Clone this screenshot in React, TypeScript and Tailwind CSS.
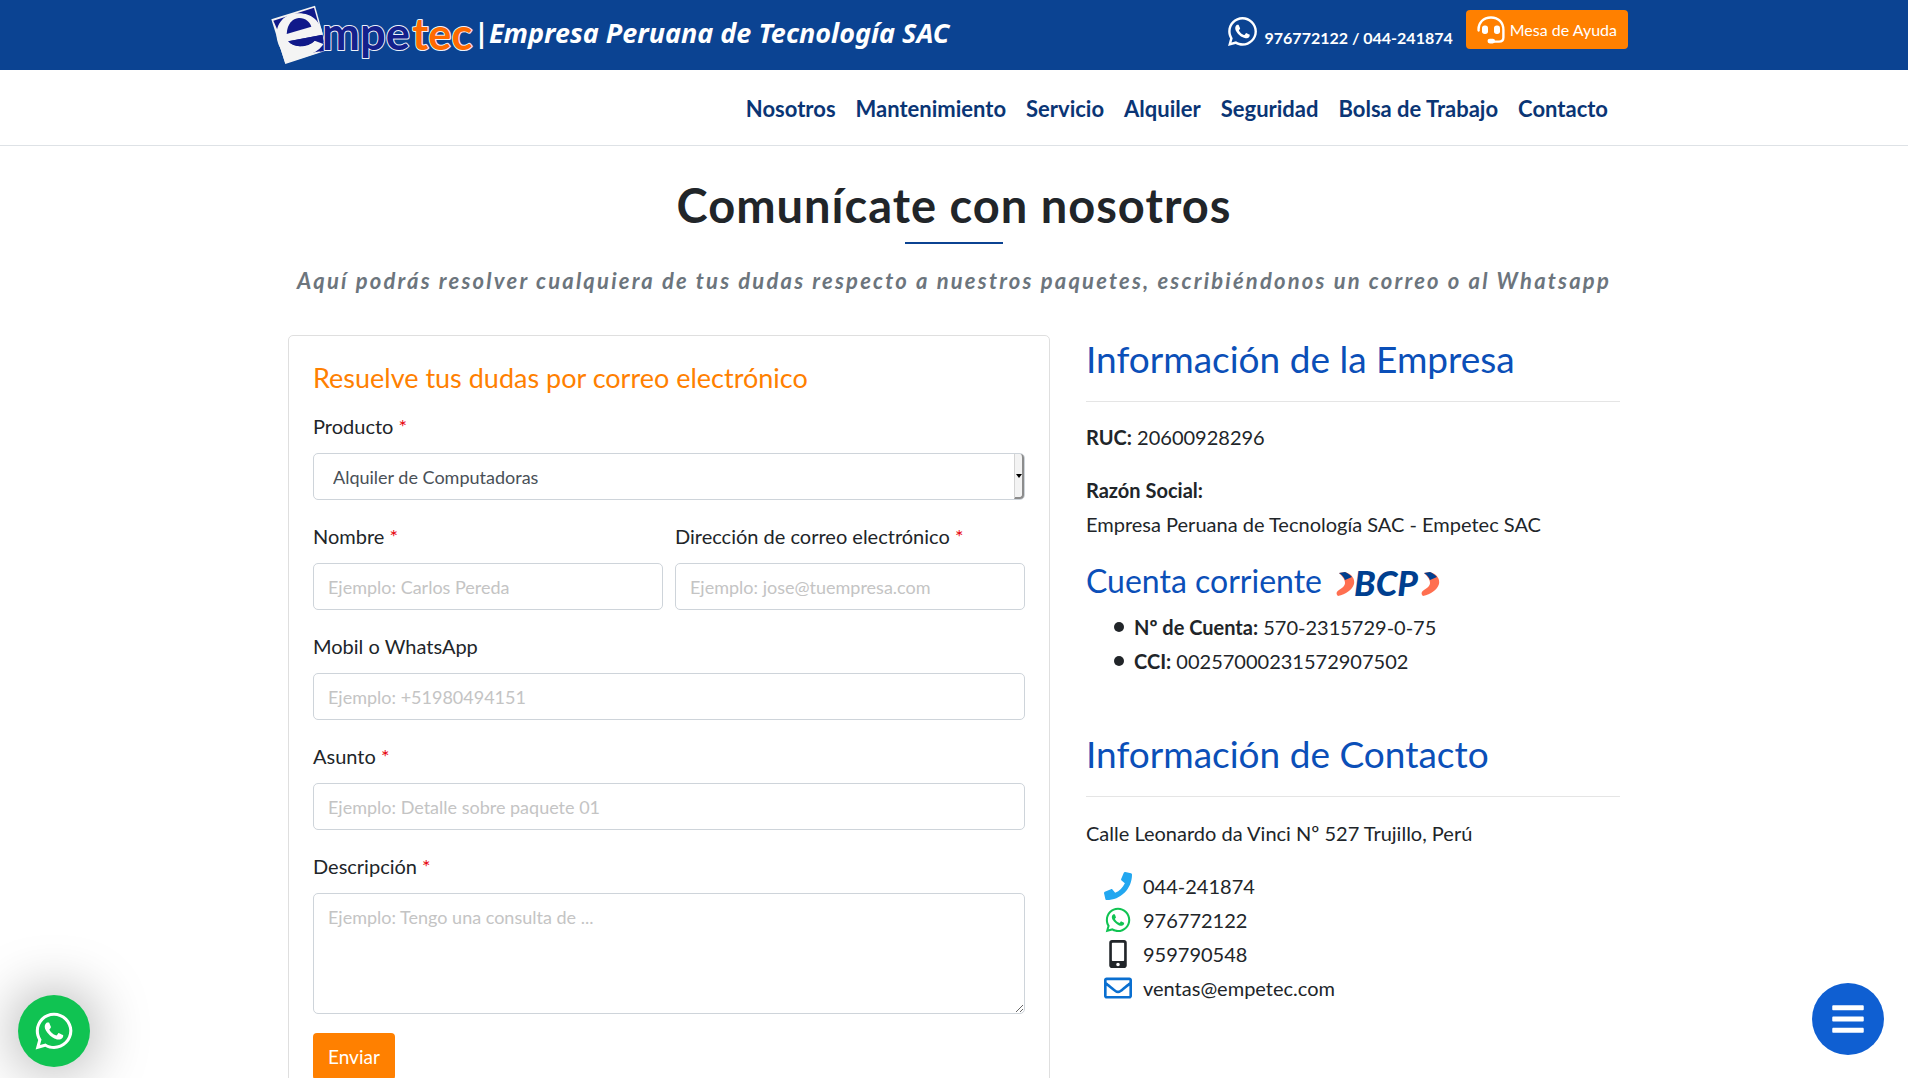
import type { ReactNode } from "react";
import { FaBars, FaMobileAlt, FaPhone, FaRegEnvelope, FaWhatsapp } from "react-icons/fa";

const navLinks = ["Nosotros", "Mantenimiento", "Servicio", "Alquiler", "Seguridad", "Bolsa de Trabajo", "Contacto"];

const contacts = [
  { icon: <FaPhone size={28} className="text-[#22a7f0]" />, text: "044-241874", href: "tel:044241874" },
  { icon: <FaWhatsapp size={28} className="text-[#10c352]" />, text: "976772122", href: "tel:976772122" },
  { icon: <FaMobileAlt size={28} className="text-[#212529]" />, text: "959790548", href: "tel:959790548" },
  { icon: <FaRegEnvelope size={28} className="text-[#0a6fd0]" />, text: "ventas@empetec.com", href: "mailto:ventas@empetec.com" },
];

const inputClass =
  "block w-full h-[47px] rounded-[5px] border border-[#ced4da] bg-white px-[14px] text-lg text-[#495057] placeholder-[#c4c4c4] outline-none focus:border-[#80bdff]";

function Logo() {
  return (
    <svg viewBox="30 12 612 186" className="h-[62px] w-[204px]" role="img" aria-label="Empetec">
      <polygon points="34,58 165,17 202,151 76,192" fill="#f4f4f4" />
      <polygon points="40,62 162,23 197,148 180,154 120,166 66,120" fill="#10198a" />
      {/* big tilted "e" */}
      <path
        d="M188 104 C184 62 150 36 108 40 C68 44 42 78 52 122 C62 166 100 178 146 164 C166 158 182 146 190 132 L164 122 C146 142 104 146 86 124 Z"
        fill="#f4f4f4"
      />
      <path d="M56 130 L76 190 L180 157 L150 160 C104 172 72 160 56 130 Z" fill="#f4f4f4" />
      <path d="M80 102 C82 70 98 56 116 54 C136 53 150 66 154 80 Z" fill="#10198a" />
      <path d="M84 124 L188 104 L192 126 L166 121 C142 142 104 146 84 124 Z" fill="#10198a" />
      <path d="M178 155 C186 148 192 138 196 128 L204 152 Z" fill="#10198a" />
      <g
        fontFamily="Lato, sans-serif"
        fontWeight="700"
        stroke="#eef2fa"
        strokeWidth="6"
        strokeLinejoin="round"
        paintOrder="stroke"
      >
        <text x="186" y="151" fontSize="136" fill="#14208c">
          mpe
        </text>
        <text x="457" y="151" fontSize="130" fill="#ff6a00">
          tec
        </text>
      </g>
    </svg>
  );
}

function HeadsetIcon() {
  return (
    <svg viewBox="0 0 28 28" className="size-7" fill="none" stroke="currentColor" strokeWidth="2.4" strokeLinecap="round">
      <path d="M1.600 14.500C1 6.500 6.500 1.500 14 1.500c7.500 0 12.400 5 12.400 12.500v7.500c0 2.800-1.600 4.100-4.400 4.100h-8" />
      <rect x="5" y="9.500" width="6" height="8.500" rx="2.700" fill="currentColor" stroke="none" />
      <rect x="17" y="9.500" width="6" height="8.500" rx="2.700" fill="currentColor" stroke="none" />
      <rect x="10.500" y="22.800" width="7.500" height="4.600" rx="2.300" fill="currentColor" stroke="none" />
    </svg>
  );
}

function BcpLogo() {
  return (
    <svg viewBox="0 -8 104 50" className="h-[50px] w-[104px] overflow-visible" role="img" aria-label="BCP">
      <path d="M3 9 L9 8 C16 10 19 15 18 20 C16 26 10 30 2 32 C0 30 0 28 3 26 C6 24 9 22 9 19 C9 15 6 12 3 9 Z" fill="#ff6f50" />
      <path d="M3 9 L9 8 C12 9 14 11 16 13 L9 16 C8 13 6 11 3 9 Z" fill="#003f8f" />
      <path d="M88 9 L94 8 C101 10 104 15 103 20 C101 26 95 30 87 32 C85 30 85 28 88 26 C91 24 94 22 94 19 C94 15 91 12 88 9 Z" fill="#ff6f50" />
      <path d="M88 9 L94 8 C97 9 99 11 101 13 L94 16 C93 13 91 11 88 9 Z" fill="#003f8f" />
      <text x="18" y="32" fontFamily="Lato, sans-serif" fontSize="35" fontWeight="900" fontStyle="italic" fill="#003f8f">
        BCP
      </text>
    </svg>
  );
}

interface FieldProps {
  id: string;
  label: string;
  required?: boolean;
  children: ReactNode;
}

function Field({ id, label, required, children }: FieldProps) {
  return (
    <div className="mb-[19px]">
      <label htmlFor={id} className="mb-[10px] block">
        {label} {required && <span className="text-red-600">*</span>}
      </label>
      {children}
    </div>
  );
}

function ContactForm() {
  return (
    <form className="rounded-[5px] border border-[#dfdfdf] p-6" onSubmit={(e) => e.preventDefault()}>
      <h2 className="mb-[13px] text-[27px] leading-9 text-[#ff8000]">Resuelve tus dudas por correo electrónico</h2>

      <Field id="producto" label="Producto" required>
        <div className="relative">
          <select
            id="producto"
            className="block h-[47px] w-full appearance-none rounded-[5px] border border-[#ced4da] bg-white px-[19px] text-lg text-[#495057] outline-none"
          >
            <option>Alquiler de Computadoras</option>
            <option>Alquiler de Impresoras</option>
          </select>
          <span className="pointer-events-none absolute inset-y-px right-px flex w-[10px] items-center justify-center rounded-r-[4px] border-r-2 border-b-2 border-l border-[#8c8c8c] border-l-[#d4d4d4] bg-[#f3f3f3]">
            <svg viewBox="0 0 6 4" className="h-1 w-1.5 shrink-0">
              <path d="M0 0h6L3 4z" />
            </svg>
          </span>
        </div>
      </Field>

      <div className="grid grid-cols-2 gap-3">
        <Field id="nombre" label="Nombre" required>
          <input id="nombre" type="text" placeholder="Ejemplo: Carlos Pereda" className={inputClass} />
        </Field>
        <Field id="correo" label="Dirección de correo electrónico" required>
          <input id="correo" type="email" placeholder="Ejemplo: jose@tuempresa.com" className={inputClass} />
        </Field>
      </div>

      <Field id="mobil" label="Mobil o WhatsApp">
        <input id="mobil" type="tel" placeholder="Ejemplo: +51980494151" className={inputClass} />
      </Field>
      <Field id="asunto" label="Asunto" required>
        <input id="asunto" type="text" placeholder="Ejemplo: Detalle sobre paquete 01" className={inputClass} />
      </Field>
      <Field id="descripcion" label="Descripción" required>
        <textarea
          id="descripcion"
          placeholder="Ejemplo: Tengo una consulta de ..."
          className="block h-[121px] w-full rounded-[5px] border border-[#ced4da] bg-white px-[14px] py-[9px] text-lg text-[#495057] placeholder-[#c4c4c4] outline-none"
        />
      </Field>

      <button type="submit" className="h-[47px] rounded-[4px] bg-[#ff8000] px-[15px] text-[19px] text-white">
        Enviar
      </button>
    </form>
  );
}

function CompanyInfo() {
  return (
    <aside>
      <h2 className="border-b border-[#e5e5e5] pb-[18px] text-[37px] leading-[48px] text-[#0b4fb8]">Información de la Empresa</h2>
      <p className="mt-[18px]">
        <strong>RUC:</strong> 20600928296
      </p>
      <p className="mt-[19px]">
        <strong>Razón Social:</strong>
        <br />
        Empresa Peruana de Tecnología SAC - Empetec SAC
      </p>

      <h3 className="mt-[19px] mb-2 flex h-[42px] items-center gap-[14px] text-[32px] leading-[42px] text-[#0b4fb8]">
        Cuenta corriente
        <BcpLogo />
      </h3>
      <ul className="mb-[52px] pl-7">
        <li className="flex items-center gap-[10px]">
          <span className="size-[10px] rounded-full bg-[#212529]" />
          <span>
            <strong>Nº de Cuenta:</strong> 570-2315729-0-75
          </span>
        </li>
        <li className="flex items-center gap-[10px]">
          <span className="size-[10px] rounded-full bg-[#212529]" />
          <span>
            <strong>CCI:</strong> 00257000231572907502
          </span>
        </li>
      </ul>

      <h2 className="border-b border-[#e5e5e5] pb-[18px] text-[37px] leading-[48px] text-[#0b4fb8]">Información de Contacto</h2>
      <p className="my-[19px]">Calle Leonardo da Vinci Nº 527 Trujillo, Perú</p>
      <ul className="pl-[18px]">
        {contacts.map((c) => (
          <li key={c.text}>
            <a href={c.href} className="flex items-center gap-[11px]">
              <span className="flex h-[34px] w-7 items-center justify-center">{c.icon}</span>
              {c.text}
            </a>
          </li>
        ))}
      </ul>
    </aside>
  );
}

export default function App() {
  return (
    <div className="bg-white font-[Lato,sans-serif] text-xl leading-[34px] text-[#212529]">
      <header>
        <div className="bg-[#0b4392] text-white">
          <div className="mx-auto flex h-[70px] max-w-[1368px] justify-between pr-[10px]">
            <a href="#" className="flex items-center">
              <Logo />
              <span className="pb-1 font-['Noto_Sans',sans-serif] text-[27px] font-bold">
                |<span className="italic">Empresa Peruana de Tecnología SAC</span>
              </span>
            </a>
            <div className="flex items-start gap-[13px] pt-[10px]">
              <a href="#" className="flex items-end gap-[6px] pt-[5px] text-base font-bold">
                <FaWhatsapp size={33} />
                <span className="leading-5">976772122 / 044-241874</span>
              </a>
              <button className="flex h-[39px] items-center gap-[5px] rounded-[4px] bg-[#ff8000] px-[11px] text-base">
                <HeadsetIcon />
                Mesa de Ayuda
              </button>
            </div>
          </div>
        </div>
        <div className="border-b border-[#dee2e6]">
          <nav className="mx-auto flex h-[75px] max-w-[1368px] items-center justify-end gap-5 pt-0.5 pr-[30px] text-[22px] font-bold text-[#0a3575]">
            {navLinks.map((link) => (
              <a key={link} href="#">
                {link}
              </a>
            ))}
          </nav>
        </div>
      </header>

      <main className="mx-auto max-w-[1368px] px-[18px] pt-[30px]">
        <div className="text-center">
          <h1 className="text-[47px] leading-[58px] font-bold tracking-[1px]">Comunícate con nosotros</h1>
          <div className="mx-auto mt-2 h-0.5 w-[98px] bg-[#0b4392]" />
          <p className="mt-5 mb-[37px] text-[22px] font-bold tracking-widest text-[#6c757d] italic">
            Aquí podrás resolver cualquiera de tus dudas respecto a nuestros paquetes, escribiéndonos un correo o al Whatsapp
          </p>
        </div>
        <div className="-mx-[18px] grid grid-cols-12">
          <div className="col-span-7 px-[18px]">
            <ContactForm />
          </div>
          <div className="col-span-5 px-[18px]">
            <CompanyInfo />
          </div>
        </div>
      </main>

      <a
        href="#"
        aria-label="WhatsApp"
        className="fixed bottom-[11px] left-[18px] flex size-[72px] items-center justify-center rounded-full bg-[#10c352] text-white shadow-[0_0_60px_rgba(0,0,0,0.4)]"
      >
        <FaWhatsapp size={42} />
      </a>
      <button
        aria-label="Menú"
        className="fixed right-6 bottom-[23px] flex size-[72px] items-center justify-center rounded-full bg-[#0f5fd2] text-white"
      >
        <FaBars size={36} />
      </button>
    </div>
  );
}
